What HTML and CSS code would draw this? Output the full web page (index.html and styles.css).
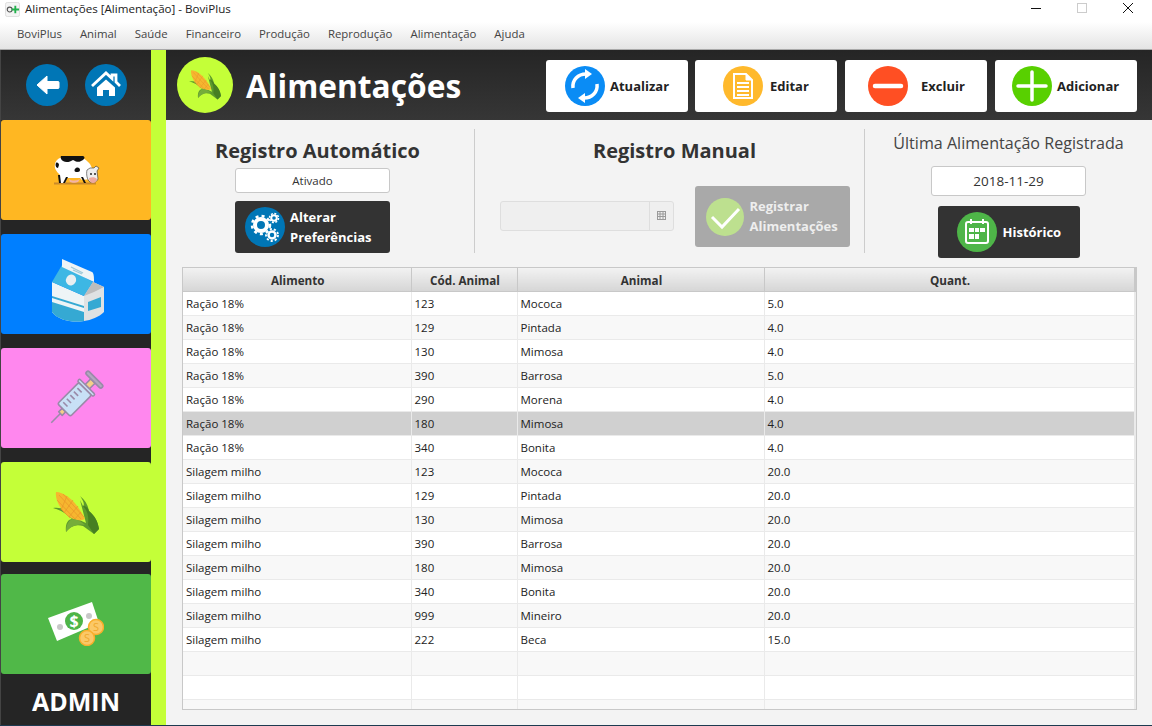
FILE: index.html
```html
<!DOCTYPE html>
<html>
<head>
  <title>Alimentações [Alimentação] - BoviPlus</title>
  <meta charset="UTF-8">
  <link rel="stylesheet" href="styles.css">
</head>
<body>
  <svg class="defs">
    <symbol id="corn" viewBox="0 0 46 44">
      <path d="M0 16C7 15 13 17 20 25L33 31 27 8 30 14C33 12 27 4 27 4 32 8 35 13 36 19 42 24 45 30 46 37L41 42 30 34C23 32 17 34 13 40 12 32 15 27 19 27 13 21 7 18 0 16Z" fill="#5c9a2d"/>
      <path d="M3 0C12 0 24 10 32 27 26 30 20 28 14 23 6 16 2 6 3 0Z" fill="#f6b62f"/>
      <path d="M6 3 28 27M10 2 31 25M4 8 22 27M8 17 17 26M14 4 8 18M20 8 11 21M25 14 16 25M28 20 21 28" stroke="#e8952a" stroke-width=".7" fill="none"/>
      <path d="M30 14C35 19 36 26 35 33L41 42 46 37C45 30 42 24 36 19 35 16 33 14 30 14Z" fill="#477f22"/>
      <path d="M19 27C24 27 28 29 32 33 25 31 18 34 13 40 13 34 15 29 19 27Z" fill="#76ad3a"/>
    </symbol>
  </svg>

  <div class="titlebar">
    <svg class="app-icon" viewBox="0 0 16 16">
      <rect x=".5" y=".5" width="15" height="15" rx="2" fill="#f4f4f4" stroke="#ddd"/>
      <circle cx="5" cy="8" r="2.6" fill="none" stroke="#555" stroke-width="1.2"/>
      <path d="M7 8h8M11 4v8" stroke="#22b04c" stroke-width="2"/>
    </svg>
    <span class="window-title">Alimentações [Alimentação] - BoviPlus</span>
    <div class="window-controls">
      <svg viewBox="0 0 10 10"><path d="M0 5.5h10" stroke="#111"/></svg>
      <svg viewBox="0 0 10 10"><rect x=".5" y=".5" width="9" height="9" fill="none" stroke="#ccc"/></svg>
      <svg viewBox="0 0 10 10"><path d="M0 0l10 10M10 0L0 10" stroke="#111"/></svg>
    </div>
  </div>

  <div class="menubar">
    <span>BoviPlus</span>
    <span>Animal</span>
    <span>Saúde</span>
    <span>Financeiro</span>
    <span>Produção</span>
    <span>Reprodução</span>
    <span>Alimentação</span>
    <span>Ajuda</span>
  </div>

  <div class="main">
    <div class="sidebar">
      <div class="nav-top">
        <svg class="nav-btn" viewBox="0 0 42 42">
          <circle cx="21" cy="21" r="21" fill="#0076b6"/>
          <path d="M11 21l10-9v5.500h11a1 1 0 0 1 1 1v5a1 1 0 0 1-1 1H21V30z" fill="#fff" stroke="#fff" stroke-linejoin="round"/>
        </svg>
        <svg class="nav-btn" viewBox="0 0 42 42">
          <circle cx="21" cy="21" r="21" fill="#0076b6"/>
          <path d="M7 22L21 9l6 5.500V11h4v7l4 4" fill="none" stroke="#fff" stroke-width="2.800"/>
          <path d="M12 23.500l9-8 9 8V32h-6v-6h-6v6h-6z" fill="#fff"/>
        </svg>
      </div>

      <div class="tile tile-orange">
        <svg class="cow" viewBox="0 0 48 30">
          <path d="M2 28.500h42" stroke="#c98a2b" stroke-width="2"/>
          <path d="M3 9C4 3 11 1 20 1c8 0 13 2 18 8l3 6-2 9-9 1-2-2H15l-2 5H7l1-8C4 16 2 13 3 9z" fill="#fff"/>
          <path d="M9 1h22c3 1 1 4-2 5-3 2-6 0-8-1-3 2-7 3-10 1-2-1-3-4-2-5zM4 8c1-1 3 0 3 2l-1 3c-2 0-3-3-2-5zM6 20l1 8h2l-1-8zM14 22l-3 6h2l3-6zM29 22l3 6h2l-3-6zM24 13c2-1 4 0 4 2s-2 2-4 2-2-3 0-4z" fill="#111"/>
          <path d="M17 24c3 2 7 2 11 0l-2 3c-2 1-6 1-8 0z" fill="#f4b3a6"/>
          <path d="M35 15l3-2 4 0 2-2 3 2-2 3 1 8c-1 3-5 4-8 3-3-2-4-8-3-12z" fill="#eee" stroke="#333" stroke-width=".6"/>
          <path d="M37 23c3-1 6-1 8 1 0 2-2 4-4 4s-4-2-4-5z" fill="#eea9a0"/>
          <circle cx="39" cy="19" r=".9" fill="#111"/><circle cx="43" cy="19" r=".9" fill="#111"/>
        </svg>
      </div>

      <div class="tile tile-blue">
        <svg class="carton" viewBox="0 0 52 63">
          <path d="M0 23 32 37V62C20 64 6 61 0 53z" fill="#eef4f6"/>
          <path d="M10 6 41 23 32 37 0 23z" fill="#3db7e4"/>
          <path d="M0 43 32 53V62C20 64 6 61 0 53z" fill="#35a9d3"/>
          <path d="M0 37 32 47v2L0 39z" fill="#35a9d3"/>
          <path d="M10 0 40 13c2 1 2 6 2 10L10 8z" fill="#eef4f6"/>
          <path d="M19 8l12 6M21 11l9 4" stroke="#9ec9d8" stroke-width="1.300"/>
          <path d="M32 37 41 23 52 28V53C47 58 39 61 32 62z" fill="#dfe2e3"/>
          <path d="M32 37 41 23 52 28 42 33z" fill="#bdbdbd"/>
          <path d="M36 43 49 38V48L36 52z" fill="#35a9d3"/>
          <ellipse cx="19" cy="21" rx="5" ry="5.500" fill="#e9eff1" transform="rotate(30 19 21)"/>
        </svg>
      </div>

      <div class="tile tile-pink">
        <svg class="syringe" viewBox="0 0 50 50">
          <g transform="rotate(45 25 25)" stroke="#9a8aa8" stroke-width="1.600" stroke-linejoin="round">
            <path d="M25 47V60" fill="none"/>
            <rect x="22.500" y="42" width="5" height="5" fill="#f5cf8a"/>
            <rect x="16" y="12" width="18" height="30" rx="2" fill="#c8e0f6"/>
            <rect x="22" y="1" width="6" height="8" fill="#f5cf8a"/>
            <rect x="14" y="9" width="22" height="3" rx="1.500" fill="#c8e0f6"/>
            <rect x="14" y="-3" width="22" height="4" rx="2" fill="#b4a7c0"/>
            <path d="M19 17h6M19 22h6M19 27h6M19 32h6M19 37h6" fill="none"/>
          </g>
        </svg>
      </div>

      <div class="tile tile-lime">
        <svg class="corn-big"><use href="#corn"/></svg>
      </div>

      <div class="tile tile-green">
        <svg class="money" viewBox="0 0 56 44">
          <path d="M0 16 44 0l7 21-42 18z" fill="#fff"/>
          <circle cx="26" cy="19" r="9" fill="#4eb548"/>
          <text x="26" y="25" class="money-sign">$</text>
          <circle cx="12" cy="25" r="3" fill="#c8c8c8"/>
          <circle cx="41" cy="14" r="3" fill="#c8c8c8"/>
          <circle cx="48" cy="25" r="7.500" fill="#fbc868" stroke="#f9ae2c" stroke-width="1.500"/>
          <text x="48" y="29" class="coin-sign">S</text>
          <circle cx="39" cy="36" r="7.500" fill="#fbc868" stroke="#f9ae2c" stroke-width="1.500"/>
          <text x="39" y="40" class="coin-sign">S</text>
        </svg>
      </div>

      <div class="admin">ADMIN</div>
    </div>

    <div class="stripe"></div>

    <div class="content">
      <div class="header">
        <div class="logo"><svg class="corn-small"><use href="#corn"/></svg></div>
        <h1>Alimentações</h1>
        <div class="actions">
          <button class="action action-refresh">
            <svg viewBox="0 0 40 40">
              <circle cx="20" cy="20" r="20" fill="#0a8cf5"/>
              <path d="M8 22C7 14 13 8 21 8" fill="none" stroke="#fff" stroke-width="3.500"/>
              <path d="M20 3l7 5-7 5z" fill="#fff"/>
              <path d="M32 18c1 8-5 14-13 14" fill="none" stroke="#fff" stroke-width="3.500"/>
              <path d="M20 37l-7-5 7-5z" fill="#fff"/>
            </svg>
            <span>Atualizar</span>
          </button>
          <button class="action action-edit">
            <svg viewBox="0 0 40 40">
              <circle cx="20" cy="20" r="20" fill="#ffb92c"/>
              <path d="M11 8h12l6 6v18H11z" fill="none" stroke="#fff" stroke-width="2"/>
              <path d="M23 8v6h6" fill="#fff" stroke="#fff"/>
              <path d="M14 17h12M14 21h12M14 25h12M14 29h12" stroke="#fff" stroke-width="2"/>
            </svg>
            <span>Editar</span>
          </button>
          <button class="action action-delete">
            <svg viewBox="0 0 40 40">
              <circle cx="20" cy="20" r="20" fill="#ff4f23"/>
              <path d="M7 20h26" stroke="#fff" stroke-width="4.500" stroke-linecap="round"/>
            </svg>
            <span>Excluir</span>
          </button>
          <button class="action action-add">
            <svg viewBox="0 0 40 40">
              <circle cx="20" cy="20" r="20" fill="#58d000"/>
              <path d="M6 20h28M20 6v28" stroke="#fff" stroke-width="3.500" stroke-linecap="round"/>
            </svg>
            <span>Adicionar</span>
          </button>
        </div>
      </div>

      <div class="panels">
        <div class="panel panel-auto">
          <h2>Registro Automático</h2>
          <div class="field field-status">Ativado</div>
          <button class="dark-btn dark-btn-prefs">
            <svg viewBox="0 0 40 40">
              <circle cx="20" cy="20" r="20" fill="#0076b6"/>
              <circle cx="16" cy="18" r="6" fill="none" stroke="#fff" stroke-width="4"/>
              <circle cx="16" cy="18" r="9" fill="none" stroke="#fff" stroke-width="2.500" stroke-dasharray="3 3.100"/>
              <circle cx="29" cy="11" r="2.800" fill="none" stroke="#fff" stroke-width="2"/>
              <circle cx="29" cy="11" r="4.500" fill="none" stroke="#fff" stroke-width="1.500" stroke-dasharray="2 1.500"/>
              <circle cx="27" cy="28" r="3.500" fill="none" stroke="#fff" stroke-width="2.500"/>
              <circle cx="27" cy="28" r="6" fill="none" stroke="#fff" stroke-width="1.800" stroke-dasharray="2.200 2"/>
            </svg>
            <span>Alterar<br>Preferências</span>
          </button>
        </div>

        <div class="panel panel-manual">
          <h2>Registro Manual</h2>
          <div class="manual-row">
            <div class="date-field">
              <div class="date-input"></div>
              <div class="date-toggle">
                <svg viewBox="0 0 9 9"><path d="M0 .5h9M0 3h9M0 5.500h9M0 8.500h9M.5 0v9M3 0v9M6 0v9M8.500 0v9" stroke="#9a9a9a"/></svg>
              </div>
            </div>
            <button class="dark-btn dark-btn-off">
              <svg viewBox="0 0 38 38">
                <circle cx="19" cy="19" r="19" fill="#bde08f"/>
                <path d="M6 19l10 10L33 11" fill="none" stroke="#fff" stroke-width="3"/>
              </svg>
              <span>Registrar<br>Alimentações</span>
            </button>
          </div>
        </div>

        <div class="panel panel-last">
          <div class="last-title">Última Alimentação Registrada</div>
          <div class="field field-date">2018-11-29</div>
          <button class="dark-btn dark-btn-history">
            <svg viewBox="0 0 40 40">
              <circle cx="20" cy="20" r="20" fill="#4eb548"/>
              <rect x="9" y="10" width="22" height="21" rx="2" fill="none" stroke="#fff" stroke-width="2"/>
              <path d="M14 7v5M26 7v5" stroke="#fff" stroke-width="2"/>
              <path d="M12 16h5v4h-5zM18 16h4v4h-4zM23 16h5v4h-5zM12 22h5v5h-5zM18 22h4v5h-4z" fill="#fff"/>
            </svg>
            <span>Histórico</span>
          </button>
        </div>
      </div>

      <div class="grid-wrap">
        <table class="grid">
          <colgroup>
            <col class="col-food"><col class="col-code"><col class="col-animal"><col class="col-qty"><col>
          </colgroup>
          <thead>
            <tr><th>Alimento</th><th>Cód. Animal</th><th>Animal</th><th>Quant.</th><th></th></tr>
          </thead>
          <tbody>
            <tr><td>Ração 18%</td><td>123</td><td>Mococa</td><td>5.0</td><td></td></tr>
            <tr><td>Ração 18%</td><td>129</td><td>Pintada</td><td>4.0</td><td></td></tr>
            <tr><td>Ração 18%</td><td>130</td><td>Mimosa</td><td>4.0</td><td></td></tr>
            <tr><td>Ração 18%</td><td>390</td><td>Barrosa</td><td>5.0</td><td></td></tr>
            <tr><td>Ração 18%</td><td>290</td><td>Morena</td><td>4.0</td><td></td></tr>
            <tr class="selected"><td>Ração 18%</td><td>180</td><td>Mimosa</td><td>4.0</td><td></td></tr>
            <tr><td>Ração 18%</td><td>340</td><td>Bonita</td><td>4.0</td><td></td></tr>
            <tr><td>Silagem milho</td><td>123</td><td>Mococa</td><td>20.0</td><td></td></tr>
            <tr><td>Silagem milho</td><td>129</td><td>Pintada</td><td>20.0</td><td></td></tr>
            <tr><td>Silagem milho</td><td>130</td><td>Mimosa</td><td>20.0</td><td></td></tr>
            <tr><td>Silagem milho</td><td>390</td><td>Barrosa</td><td>20.0</td><td></td></tr>
            <tr><td>Silagem milho</td><td>180</td><td>Mimosa</td><td>20.0</td><td></td></tr>
            <tr><td>Silagem milho</td><td>340</td><td>Bonita</td><td>20.0</td><td></td></tr>
            <tr><td>Silagem milho</td><td>999</td><td>Mineiro</td><td>20.0</td><td></td></tr>
            <tr><td>Silagem milho</td><td>222</td><td>Beca</td><td>15.0</td><td></td></tr>
            <tr><td></td><td></td><td></td><td></td><td></td></tr>
            <tr><td></td><td></td><td></td><td></td><td></td></tr>
            <tr><td></td><td></td><td></td><td></td><td></td></tr>
          </tbody>
        </table>
      </div>
    </div>
  </div>
</body>
</html>
```

FILE: styles.css
```css
* {
  box-sizing: border-box;
}
body {
  margin: 0;
  width: 1152px;
  height: 726px;
  overflow: hidden;
  background-color: #1d3a50;
  font-family: 'Open Sans', sans-serif;
  color: #333;
}
.defs {
  display: none;
}

.titlebar {
  display: flex;
  align-items: center;
  height: 22px;
  padding-left: 5px;
  background-color: #fff;
}
.app-icon {
  width: 15px;
  height: 15px;
  margin-top: -4px;
}
.window-title {
  margin-left: 5px;
  margin-top: -6px;
  font-size: 11.6px;
  color: #222;
}
.window-controls {
  display: flex;
  gap: 36px;
  margin-left: auto;
  margin-right: 19px;
  margin-top: -6px;
}
.window-controls svg {
  display: block;
  width: 10px;
  height: 10px;
}

.menubar {
  display: flex;
  align-items: center;
  gap: 18px;
  height: 28px;
  padding-left: 17px;
  padding-bottom: 4px;
  background: linear-gradient(#fff, #e4e4e4);
  border-bottom: 1px solid #a9a9a9;
  font-size: 11.4px;
  color: #444;
}

.main {
  display: flex;
  height: 675px;
}
.sidebar {
  width: 151px;
  background-color: #252525;
  border-left: 1px solid #444;
}
.nav-top {
  display: flex;
  gap: 17px;
  height: 70px;
  padding: 14px 0 0 25px;
  background: linear-gradient(#252525, #363636);
}
.nav-btn {
  width: 42px;
  height: 42px;
}
.tile {
  display: flex;
  align-items: center;
  justify-content: center;
  height: 100px;
  margin-bottom: 14px;
  border-radius: 3px;
}
.tile-orange { background-color: #ffb722; }
.tile-blue { background-color: #007fff; }
.tile-pink { background-color: #ff87ee; }
.tile-lime { background-color: #c4ff38; margin-bottom: 12px; }
.tile-green { background-color: #50b848; margin-bottom: 0; }
.cow { width: 48px; height: 30px; }
.carton { width: 52px; height: 63px; margin: 12px 0 0 4px; }
.syringe { width: 50px; height: 50px; overflow: visible; }
.corn-big { width: 46px; height: 44px; margin-top: 4px; }
.money { width: 56px; height: 44px; }
.money-sign {
  font-size: 16px;
  font-weight: 700;
  fill: #fff;
  text-anchor: middle;
}
.coin-sign {
  font-size: 11px;
  fill: #f0a92c;
  text-anchor: middle;
}
.admin {
  height: 51px;
  text-align: center;
  font-size: 25px;
  font-weight: 700;
  line-height: 54px;
  color: #fff;
}

.stripe {
  width: 15px;
  background-color: #c4ff38;
}
.content {
  flex: 1;
  background-color: #f3f3f3;
}

.header {
  display: flex;
  align-items: center;
  height: 70px;
  padding-left: 11px;
  background: linear-gradient(#252525, #363636);
}
.logo {
  display: flex;
  align-items: center;
  justify-content: center;
  width: 56px;
  height: 56px;
  border-radius: 50%;
  background-color: #c4ff38;
}
.corn-small {
  width: 32px;
  height: 31px;
}
.header h1 {
  margin: 0 0 0 13px;
  font-size: 31.7px;
  font-weight: 700;
  color: #fff;
}
.actions {
  display: flex;
  gap: 8px;
  margin-left: auto;
  margin-right: 15px;
  margin-top: 2px;
}
.action {
  display: flex;
  align-items: center;
  width: 142px;
  height: 52px;
  padding: 0;
  background-color: #fff;
  border: none;
  border-radius: 3px;
  font-family: inherit;
  font-size: 13px;
  font-weight: 700;
  color: #222;
}
.action svg {
  width: 40px;
  height: 40px;
  flex-shrink: 0;
}
.action-refresh { gap: 5px; padding-left: 19px; margin-right: -1px; }
.action-edit { gap: 7px; padding-left: 28px; }
.action-delete { gap: 13px; padding-left: 23px; }
.action-add { gap: 5px; padding-left: 17px; }

.panels {
  display: grid;
  grid-template-columns: 309px 390px 1fr;
  grid-template-rows: 124px;
  height: 124px;
  margin: 9px 0 14px;
}
.panel {
  display: flex;
  flex-direction: column;
  align-items: center;
  min-height: 0;
}
.panel h2 {
  margin: 0;
  font-size: 20px;
  font-weight: 700;
  line-height: 28px;
  color: #333;
}
.panel-auto {
  padding: 8px 5px 0 0;
  border-right: 1px solid #ccc;
}
.panel-auto .field,
.panel-auto .dark-btn {
  margin-right: 10px;
}
.panel-manual {
  padding: 8px 0 0 10px;
  border-right: 1px solid #ccc;
}
.field {
  display: flex;
  align-items: center;
  justify-content: center;
  flex-shrink: 0;
  background-color: #fff;
  border: 1px solid #c8c8c8;
  border-radius: 3px;
}
.field-status {
  width: 155px;
  height: 25px;
  margin-top: 3px;
  font-size: 11.5px;
}
.field-date {
  width: 155px;
  height: 30px;
  margin-top: 9px;
  font-size: 13.5px;
}
.dark-btn {
  display: flex;
  align-items: center;
  flex-shrink: 0;
  background-color: #333;
  border: none;
  border-radius: 3px;
  font-family: inherit;
  font-size: 13px;
  font-weight: 700;
  line-height: 20px;
  text-align: left;
  color: #fff;
}
.dark-btn svg {
  flex-shrink: 0;
}
.dark-btn-prefs {
  width: 155px;
  height: 52px;
  margin-top: 8px;
  padding: 0 0 0 10px;
  gap: 5px;
}
.dark-btn-prefs svg,
.dark-btn-history svg {
  width: 40px;
  height: 40px;
}
.dark-btn-history {
  width: 142px;
  height: 52px;
  margin-top: 10px;
  padding: 0 0 0 19px;
  gap: 6px;
}
.dark-btn-off {
  width: 155px;
  height: 61px;
  padding: 0 0 0 11px;
  gap: 6px;
  background-color: #a9a9a9;
  color: #eee;
}
.dark-btn-off svg {
  width: 38px;
  height: 38px;
}
.dark-btn-off span {
  margin-top: -2px;
}
.manual-row {
  display: flex;
  align-items: center;
  gap: 21px;
  margin-top: 21px;
}
.date-field {
  display: flex;
  width: 174px;
  height: 30px;
  margin-bottom: 2px;
  background-color: #efefef;
  border: 1px solid #dedede;
  border-radius: 3px;
}
.date-input {
  flex: 1;
}
.date-toggle {
  display: flex;
  align-items: center;
  justify-content: center;
  width: 24px;
  border-left: 1px solid #dedede;
}
.date-toggle svg {
  width: 9px;
  height: 9px;
}
.last-title {
  flex-shrink: 0;
  font-size: 16.1px;
  line-height: 28px;
  color: #444;
}

.grid-wrap {
  height: 443px;
  margin: 0 15px 0 16px;
  overflow: hidden;
  background-color: #fff;
  border: 1px solid #c8c8c8;
}
.grid {
  width: 953px;
  table-layout: fixed;
  border-collapse: collapse;
  font-size: 11.5px;
}
.col-food { width: 228px; }
.col-code { width: 106px; }
.col-animal { width: 247px; }
.col-qty { width: 370px; }
.grid th {
  height: 23px;
  padding: 2px 0 0 2px;
  background: linear-gradient(#f2f2f2, #d6d6d6);
  border-right: 1px solid #c8c8c8;
  border-bottom: 1px solid #c8c8c8;
  font-size: 11.7px;
  font-weight: 700;
  color: #333;
}
.grid td {
  height: 24px;
  padding: 0 0 0 3px;
  border-right: 1px solid #eaeaea;
  border-bottom: 1px solid #eaeaea;
  color: #222;
}
.grid tbody tr:nth-child(even) {
  background-color: #f8f8f8;
}
.grid tbody tr.selected {
  background-color: #d0d0d0;
}
```
